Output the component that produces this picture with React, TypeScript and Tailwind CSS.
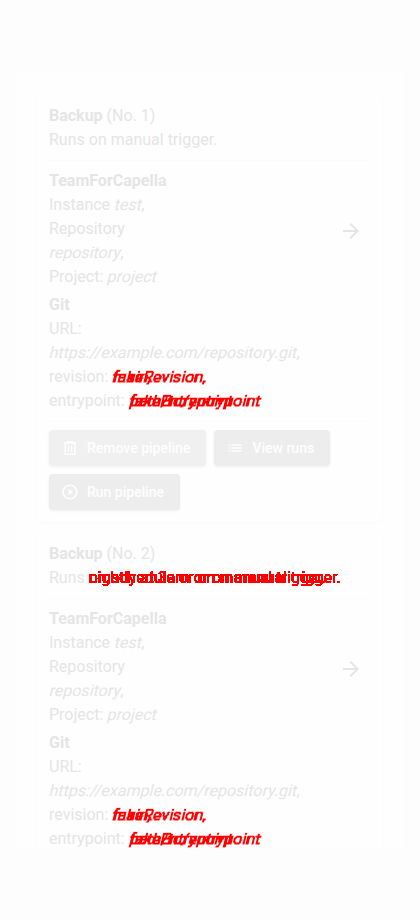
import React from 'react';
import { MdArrowForward, MdList, MdPlayCircleOutline } from 'react-icons/md';

function Slanted({ children }: { children: React.ReactNode }) {
  return <span className="inline-block h-6 origin-[0_15px] [transform:skewX(-14deg)] whitespace-nowrap align-top">{children}</span>;
}

function Overlap({ a, b }: { a: string; b: string }) {
  return (
    <span className="inline-grid whitespace-nowrap align-top text-[#ff0000] [filter:url(#crisp)]">
      <span className="col-start-1 row-start-1">{a}</span>
      <span className="col-start-1 row-start-1">{b}</span>
    </span>
  );
}

function TrashIcon() {
  return (
    <svg viewBox="0 0 18 18" className="size-[18px]" fill="none" stroke="currentColor" strokeWidth="1.4">
      <path d="M3 4h12M4.25 4v11.25h9.5V4M6.5 3.6V2.7h5v.9M7.5 6.5v6.2M10.5 6.5v6.2" />
    </svg>
  );
}

function Button({ icon, label, tone }: { icon: React.ReactNode; label: string; tone: string }) {
  return (
    <button className={`flex h-9 items-center gap-2 rounded pr-4 pl-3 text-sm font-medium whitespace-nowrap text-[#fefefe] shadow-[0_1px_3px_rgba(0,0,0,0.06)] ${tone}`}>
      <span className="flex w-[18px] justify-center">{icon}</span>
      {label}
    </button>
  );
}

function Card({ no, trigger, actions }: { no: number; trigger: React.ReactNode; actions?: React.ReactNode }) {
  return (
    <section className="mb-2 h-[430px] shrink-0 rounded-lg bg-[#fefefe] px-3 pt-3 shadow-[0_1px_5px_rgba(0,0,0,0.018)]">
      <div><b>Backup</b> (No. {no})</div>
      <div className="h-6 whitespace-nowrap">Runs {trigger}</div>
      <div className="mt-2 mb-2 h-px bg-[#fbfbfb]" />
      <div className="flex items-center">
        <div className="w-[282px]">
          <b>TeamForCapella</b>
          <div className="h-6">Instance <Slanted>test</Slanted>,</div>
          <div className="h-6">Repository</div>
          <div className="h-6"><Slanted>repository</Slanted>,</div>
          <div className="h-6">Project: <Slanted>project</Slanted></div>
        </div>
        <MdArrowForward className="mt-1 ml-[8px] size-6" />
      </div>
      <div className="mt-1">
        <b>Git</b>
        <div className="h-6">URL:</div>
        <div className="h-6"><Slanted>https://example.com/repository.git</Slanted>,</div>
        <div className="h-6">revision: <Slanted><Overlap a="fakeRevision," b="main," /></Slanted></div>
        <div className="h-6">entrypoint: <Slanted><Overlap a="fakeEntrypoint" b="path/to/entrypoint" /></Slanted></div>
      </div>
      {actions && (
        <>
          <div className="mt-2 mb-2 h-px bg-[#fbfbfb]" />
          <div className="flex flex-wrap gap-2">{actions}</div>
        </>
      )}
    </section>
  );
}

export default function App() {
  return (
    <main className="h-[920px] w-[420px] overflow-hidden bg-[#fdfdfd] px-[17px] pt-[72px] font-[Roboto,sans-serif] text-base leading-6 text-[#e5e5e5]">
      <svg className="absolute size-0" aria-hidden="true">
        <filter id="crisp" colorInterpolationFilters="sRGB">
          <feComponentTransfer in="SourceAlpha" result="mask"><feFuncA type="linear" slope="40" intercept="-3" /></feComponentTransfer>
          <feFlood floodColor="#ff0000" />
          <feComposite operator="in" in2="mask" />
        </filter>
      </svg>
      <div className="flex h-[776px] flex-col overflow-hidden rounded bg-[#fefefe] px-5 pt-5">
        <Card
          no={1}
          trigger="on manual trigger."
          actions={
            <>
              <Button icon={<TrashIcon />} label="Remove pipeline" tone="bg-[#f0f0f0]" />
              <Button icon={<MdList className="size-[18px]" />} label="View runs" tone="bg-[#ededed]" />
              <Button icon={<MdPlayCircleOutline className="size-[18px]" />} label="Run pipeline" tone="bg-[#ededed]" />
            </>
          }
        />
        <Card no={2} trigger={<Overlap a="nightly at 3am or on manual trigger." b="on schedule or on manual trigger." />} />
      </div>
    </main>
  );
}
